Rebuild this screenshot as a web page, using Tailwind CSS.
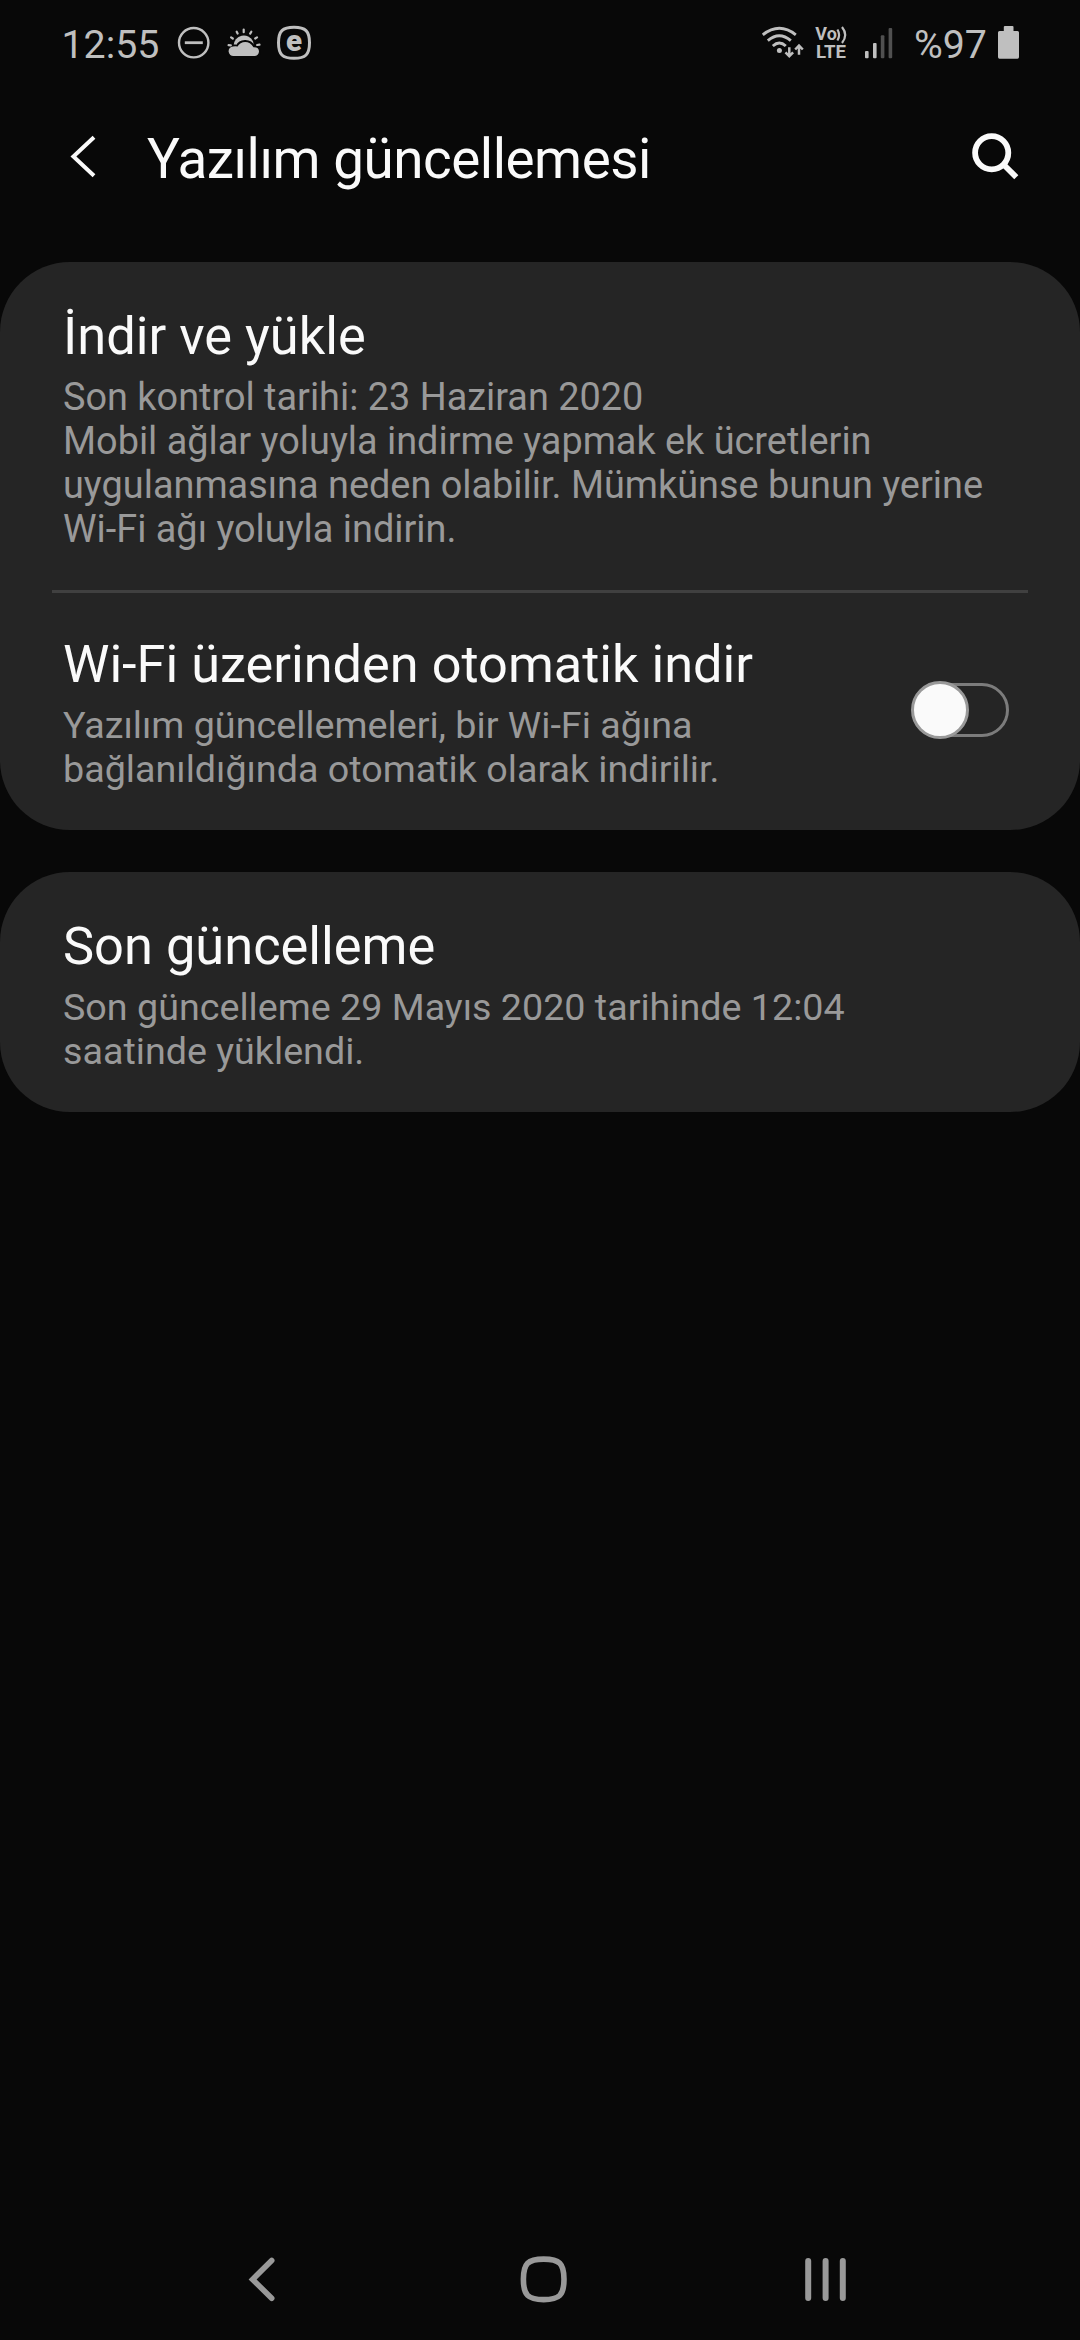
<!DOCTYPE html>
<html lang="tr">
<head>
<meta charset="utf-8">
<title>Yazılım güncellemesi</title>
<script src="https://cdn.jsdelivr.net/npm/@tailwindcss/browser@4"></script>
</head>
<body class="bg-[#080808]">
<div class="flex h-[2340px] w-[1080px] flex-col overflow-hidden bg-[#080808] font-[Roboto,sans-serif] text-[#fafafa]">

  <!-- Status bar -->
  <div class="flex h-[84px] items-start justify-between pr-[60px] pl-[61.5px] text-[39.3px] leading-[84px] text-[#bfbfbf]">
    <div class="flex">
      <span class="w-[97.5px] pt-[2.5px] whitespace-nowrap">12:55</span>
      <svg class="ml-[17px] h-[84px] w-[36px]" viewBox="176 0 36 84" fill="none" stroke="#bfbfbf">
        <circle cx="193.7" cy="42.7" r="14.7" stroke-width="2.4"/>
        <path d="M184.8 42.7H202.8" stroke-width="2.8"/>
      </svg>
      <svg class="ml-[14px] h-[84px] w-[36px]" viewBox="226 0 36 84">
        <path d="M233.6 45.5A10.2 10.2 0 0 1 253 41.3L254 46H234z" fill="#bfbfbf"/>
        <path d="M233.8 56A4.8 4.8 0 0 1 233 46.4Q236.3 46 237.6 46.6C240 41 249.5 39.5 253.5 47.2Q259 47 259 51.6A4.5 4.5 0 0 1 254.5 56Z" fill="#bfbfbf" stroke="#080808" stroke-width="3.6" paint-order="stroke"/>
        <path d="M228.6 45.1L230.8 45.4M231.1 37.3L232.8 38.5M236.7 31.7L237.6 33.5M243.7 29.6V32.2M251.3 31.7L250.2 33.6M257 37.3L255.2 38.5M259.5 44.6L257.2 45" stroke="#bfbfbf" stroke-width="2.2" stroke-linecap="round"/>
      </svg>
      <svg class="ml-[13px] h-[84px] w-[38px]" viewBox="275 0 38 84">
        <path d="M294 27.3C305.5 27.3 309.5 31 309.5 42.8S305.5 58.3 294 58.3S278.5 54.6 278.5 42.8S282.5 27.3 294 27.3Z" fill="none" stroke="#bfbfbf" stroke-width="3"/>
        <text x="294.1" y="51" text-anchor="middle" font-size="29.5" font-weight="900" fill="#bfbfbf">e</text>
      </svg>
    </div>
    <div class="flex">
      <svg class="h-[84px] w-[46px]" viewBox="760 0 46 84" fill="none" stroke="#bfbfbf" stroke-width="2.9">
        <path d="M762.8 34.8Q779.3 21.8 795.8 34.8M767.8 40.7Q779.3 30.7 790.8 40.7M772.8 46Q779.3 40 785.8 46"/>
        <circle cx="779.4" cy="50.4" r="2.5" fill="#bfbfbf" stroke="none"/>
        <path d="M789.3 47.2V56M785.5 52.3L789.3 56.3L793.1 52.3M799 54.7V46M795.2 49.5L799 45.5L802.8 49.5" stroke-width="2.5"/>
      </svg>
      <svg class="ml-[8px] h-[84px] w-[36px]" viewBox="814 0 36 84" fill="#bfbfbf" font-weight="700">
        <text x="815.3" y="40.4" font-size="17.5" textLength="21.5" lengthAdjust="spacingAndGlyphs">Vo</text>
        <text x="816" y="58.3" font-size="17.8" textLength="30" lengthAdjust="spacingAndGlyphs">LTE</text>
        <path d="M837.4 29.5Q840.8 35 837.4 40.5M842 27Q848.4 35 842 43" fill="none" stroke="#bfbfbf" stroke-width="2.2"/>
      </svg>
      <svg class="ml-[13px] h-[84px] w-[31px]" viewBox="863 0 31 84" fill="#bfbfbf">
        <rect x="865" y="51" width="3.6" height="7.3" rx="1"/>
        <rect x="873" y="43" width="3.6" height="15.3" rx="1"/>
        <rect x="880.8" y="35.3" width="3.6" height="23" rx="1" fill="#505050"/>
        <rect x="888.6" y="28" width="3.6" height="30.3" rx="1" fill="#505050"/>
      </svg>
      <span class="ml-[20px] w-[73px] pt-[2.5px] whitespace-nowrap">%97</span>
      <svg class="ml-[9px] h-[84px] w-[24px]" viewBox="996 0 24 84" fill="#bfbfbf">
        <path d="M1005 26H1012.500Q1013.500 26 1013.500 27V31H1017.500Q1019 31 1019 32.500V57Q1019 58.700 1017.500 58.700H999.500Q998 58.700 998 57V32.500Q998 31 999.500 31H1003.800V27Q1003.800 26 1005 26Z"/>
      </svg>
    </div>
  </div>

  <!-- App bar -->
  <header class="flex h-[178px] items-start justify-between pr-[56px] pl-[64px]">
    <div class="flex items-start">
      <svg class="mt-[46px] h-[54px] w-[40px]" viewBox="64 130 40 54" fill="none" stroke="#fafafa" stroke-width="4">
        <path d="M94 137.300L73.400 156.500L94 175.800"/>
      </svg>
      <h1 class="mt-[39px] ml-[43px] text-[54.8px] leading-[72px] font-normal tracking-[-0.48px] whitespace-nowrap">Yazılım güncellemesi</h1>
    </div>
    <svg class="mt-[46px] h-[54px] w-[54px]" viewBox="970 130 54 54" fill="none" stroke="#fafafa">
      <circle cx="991.700" cy="152.700" r="16.600" stroke-width="5.800"/>
      <path d="M1003.500 164.500L1016.300 177.200" stroke-width="5.800"/>
    </svg>
  </header>

  <main class="flex flex-1 flex-col gap-[42px]">
    <section class="rounded-[70px] bg-[#252525]">
      <div class="h-[328px] px-[63px] pt-[43px]">
        <h2 class="text-[52.4px] leading-[62px] font-normal">İndir ve yükle</h2>
        <p class="mt-2 text-[37.87px] leading-[44px] whitespace-nowrap text-[#999999]">Son kontrol tarihi: 23 Haziran 2020<br>Mobil ağlar yoluyla indirme yapmak ek ücretlerin<br>uygulanmasına neden olabilir. Mümkünse bunun yerine<br>Wi-Fi ağı yoluyla indirin.</p>
      </div>
      <div class="mx-[52px] h-[3px] bg-[#404040]"></div>
      <div class="flex h-[237px] items-start justify-between pt-10 pr-[71px] pl-[63px]">
        <div>
          <h2 class="text-[52.3px] leading-[62px] font-normal">Wi-Fi üzerinden otomatik indir</h2>
          <p class="mt-2 text-[37.7px] leading-[44px] whitespace-nowrap text-[#999999]">Yazılım güncellemeleri, bir Wi-Fi ağına<br>bağlanıldığında otomatik olarak indirilir.</p>
        </div>
        <div class="mt-[48px] flex h-[58px] w-[98px] items-center">
          <div class="relative ml-[2px] h-[54px] w-[96px] rounded-full border-[3px] border-[#7c7c7c]">
            <div class="absolute top-[-5px] left-[-5px] size-[58px] rounded-full border-[3px] border-[#999999] bg-[#fafafa]"></div>
          </div>
        </div>
      </div>
    </section>

    <section class="h-[240px] rounded-[70px] bg-[#252525] px-[63px] pt-[43px]">
      <h2 class="text-[52.4px] leading-[62px] font-normal">Son güncelleme</h2>
      <p class="mt-2 text-[37.68px] leading-[44px] whitespace-nowrap text-[#999999]">Son güncelleme 29 Mayıs 2020 tarihinde 12:04<br>saatinde yüklendi.</p>
    </section>
  </main>

  <!-- Navigation bar -->
  <nav class="flex h-[122px] items-center pl-[244px]">
    <svg class="h-[122px] w-[36px]" viewBox="244 2218 36 122" fill="none" stroke="#999999" stroke-width="5.600" stroke-linecap="round">
      <path d="M271.700 2260.500L252.600 2279.400L271.700 2298.300" stroke-linejoin="miter"/>
    </svg>
    <svg class="ml-[238px] h-[122px] w-[52px]" viewBox="518 2218 52 122" fill="none" stroke="#999999" stroke-width="5.600">
      <path d="M543.700 2259.100C559.500 2259.100 564 2263.500 564 2279.300S559.500 2299.600 543.700 2299.600S523.400 2295.100 523.400 2279.300S527.900 2259.100 543.700 2259.100Z"/>
    </svg>
    <svg class="ml-[230px] h-[122px] w-[50px]" viewBox="800 2218 50 122" fill="#999999">
      <rect x="805.200" y="2258" width="6" height="43" rx="3"/>
      <rect x="822.600" y="2258" width="6" height="43" rx="3"/>
      <rect x="839.800" y="2258" width="6" height="43" rx="3"/>
    </svg>
  </nav>
</div>
</body>
</html>
